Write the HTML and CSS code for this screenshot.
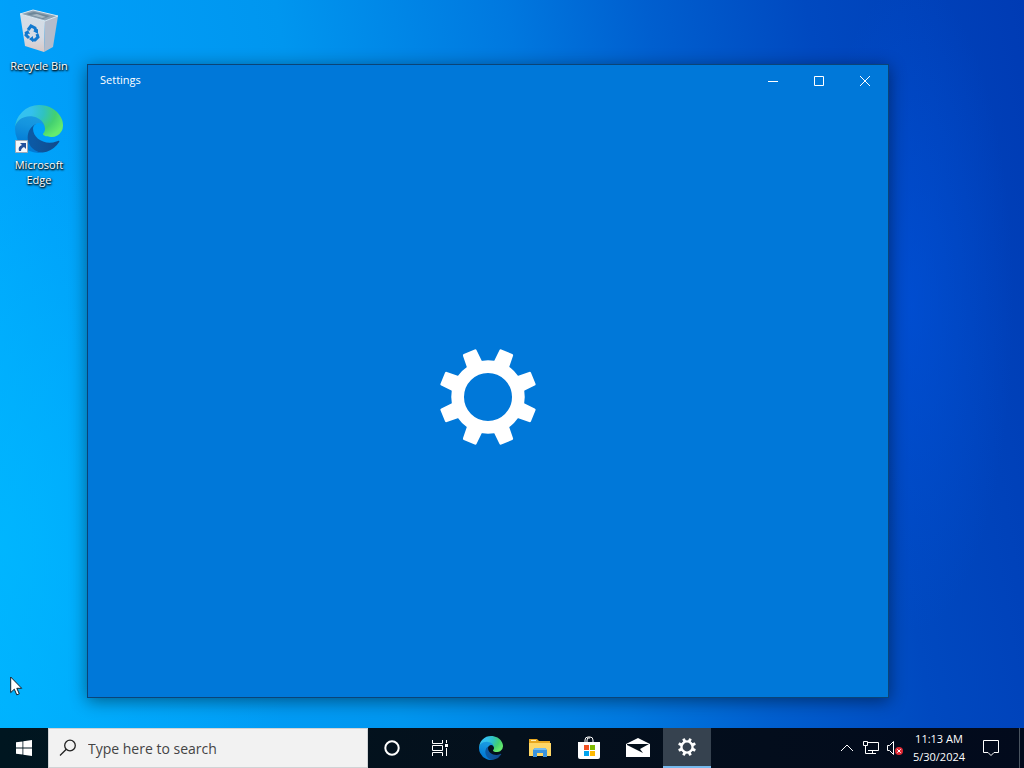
FILE: index.html
```
<!DOCTYPE html>
<html lang="en">

<head>
    <meta charset="UTF-8">
    <meta name="viewport" content="width=device-width, initial-scale=1.0">
    <title>Desktop</title>
    <link rel="stylesheet" href="styles.css">
</head>

<body>
    <!-- shared shapes -->
    <svg class="defs" aria-hidden="true">
        <defs>
            <linearGradient id="edge-navy" x1="0.2" y1="0.7" x2="1" y2="0.7">
                <stop offset="0" stop-color="#0c59a4" />
                <stop offset="1" stop-color="#114a8b" />
            </linearGradient>
            <linearGradient id="edge-blue" x1="0.6" y1="0" x2="0.4" y2="1">
                <stop offset="0" stop-color="#1b9de2" />
                <stop offset="0.3" stop-color="#1595df" />
                <stop offset="0.7" stop-color="#0680d7" />
                <stop offset="1" stop-color="#0078d4" />
            </linearGradient>
            <radialGradient id="edge-green" cx="0.1" cy="0.2" r="1">
                <stop offset="0" stop-color="#35c1f1" />
                <stop offset="0.25" stop-color="#34c1ed" />
                <stop offset="0.5" stop-color="#2fc2c0" />
                <stop offset="0.75" stop-color="#43d070" />
                <stop offset="1" stop-color="#66eb6e" />
            </radialGradient>
            <linearGradient id="bin-front" x1="0" y1="0" x2="0" y2="1">
                <stop offset="0" stop-color="#d3dde6" />
                <stop offset="0.6" stop-color="#d6dbe4" />
                <stop offset="1" stop-color="#d8c8c6" />
            </linearGradient>
        </defs>
        <symbol id="edge" viewBox="0 0 256 256">
            <path fill="url(#edge-navy)" d="M231 190.500c-3.400 1.800-6.900 3.300-10.500 4.700a101.900 101.900 0 0 1-35.900 6.400c-47.300 0-88.500-32.500-88.500-74.300a31.500 31.500 0 0 1 16.400-27.300c-42.800 1.800-53.800 46.400-53.800 72.500 0 73.900 68.100 81.400 82.800 81.400 7.900 0 19.800-2.300 27-4.600l1.300-.4a128.300 128.300 0 0 0 66.600-52.800 4.100 4.100 0 0 0-5.400-5.600z" />
            <path fill="url(#edge-blue)" d="M105.700 241.400a79.200 79.200 0 0 1-22.700-21.300 80.700 80.700 0 0 1 29.500-120c3.100-1.500 8.500-4.100 15.600-4a32.400 32.400 0 0 1 25.700 13 31.900 31.900 0 0 1 6.300 18.700c0-.2 24.500-79.600-80-79.600-43.900 0-80 41.700-80 78.200a130.200 130.200 0 0 0 12.100 56 128 128 0 0 0 156.400 67.100 75.500 75.500 0 0 1-62.800-8z" />
            <path fill="url(#edge-green)" d="M152.300 148.900c-.8 1-3.300 2.500-3.300 5.600 0 2.600 1.700 5.200 4.800 7.300 14.400 10 41.500 8.700 41.600 8.700a59.600 59.600 0 0 0 30.300-8.300 61.400 61.400 0 0 0 30.300-52.900c.3-22.400-8-37.300-11.300-43.900C223.500 23.900 177.700 0 128 0A128 128 0 0 0 0 126.200c.5-36.500 36.800-66 80-66 3.500 0 23.500.3 42 10.100 16.300 8.600 24.900 18.900 30.800 29.200 6.200 10.700 7.300 24.100 7.300 29.500s-2.700 13.300-7.800 19.900z" />
        </symbol>
        <symbol id="gear" viewBox="0 0 100 100">
            <circle cx="50" cy="50" r="31" fill="none" stroke="#fff" stroke-width="13" />
            <g fill="#fff">
                <path id="tooth" transform="rotate(22.5 50 50)" d="M44 0h12q1.500 0 1.500 1.500L58.500 17h-17L42.500 1.500Q42.500 0 44 0z" />
                <use href="#tooth" transform="rotate(45 50 50)" />
                <use href="#tooth" transform="rotate(90 50 50)" />
                <use href="#tooth" transform="rotate(135 50 50)" />
                <use href="#tooth" transform="rotate(180 50 50)" />
                <use href="#tooth" transform="rotate(225 50 50)" />
                <use href="#tooth" transform="rotate(270 50 50)" />
                <use href="#tooth" transform="rotate(315 50 50)" />
            </g>
        </symbol>
    </svg>

    <main class="desktop">
        <nav class="shortcuts">
            <a href="#" class="shortcut">
                <svg class="shortcut-icon" viewBox="0 0 48 48">
                    <path d="M5 8l13-4 25 6-13 5z" fill="#8fa3b3" />
                    <path d="M11 8l8-2 16 4-7 3z" fill="#6d8799" />
                    <path d="M16 9l6-1 9 3-4 1z" fill="#a9bac5" />
                    <path d="M5 8l25 7-1 31-19-6z" fill="url(#bin-front)" />
                    <path d="M30 15l13-5-5 31-9 5z" fill="#b4bccb" />
                    <path d="M5 8l13-4 25 6-13 5z" fill="none" stroke="#dce8f0" />
                    <g fill="none" stroke="#1279cf" stroke-width="3">
                        <path d="M13 24l3-4 4 2 1 3" />
                        <path d="M22 28l1 3-3 3h-3" />
                        <path d="M14 32l-3-3 1-3" />
                    </g>
                    <path d="M18 25l5-2v5zM18 30v6l-4-3zM9 27l4-3 2 4z" fill="#1279cf" />
                </svg>
                <span>Recycle Bin</span>
            </a>
            <a href="#" class="shortcut">
                <svg class="shortcut-icon" viewBox="0 0 48 48">
                    <use href="#edge" width="48" height="48" />
                    <path d="M.5 35.500h12v12H.5z" fill="#f5f7fa" stroke="#9daab8" />
                    <path d="M5 38h6v6l-2-2c-2 1-3 2-3 4H4c-1-3 0-5 3-6z" fill="#24519b" />
                </svg>
                <span>Microsoft Edge</span>
            </a>
        </nav>

        <section class="window">
            <header class="titlebar">
                <h1 class="title">Settings</h1>
                <button class="caption" aria-label="Minimize">
                    <svg viewBox="0 0 12 12"><path d="M1 6.500h10" /></svg>
                </button>
                <button class="caption" aria-label="Maximize">
                    <svg viewBox="0 0 12 12"><path d="M1.500 1.500h9v9h-9z" /></svg>
                </button>
                <button class="caption" aria-label="Close">
                    <svg viewBox="0 0 12 12"><path d="M1 1l10 10M11 1L1 11" /></svg>
                </button>
            </header>
            <div class="splash">
                <svg class="splash-icon"><use href="#gear" /></svg>
            </div>
        </section>

        <svg class="cursor" viewBox="0 0 13 20">
            <path d="M.7 1v15.600l3.600-3.400 2.500 5.700 2.500-1.100-2.500-5.500h4.900z" fill="#fff" stroke="#10202c" />
        </svg>
    </main>

    <footer class="taskbar">
        <button class="task" aria-label="Start">
            <svg width="16" height="16" viewBox="0 0 16 16" fill="#fff">
                <path d="M0 2.300L6.500 1.400v6.100H0zM7.300 1.300L16 0v7.500H7.300zM0 8.400h6.500v6.200L0 13.700zM7.300 8.400H16V16l-8.700-1.300z" />
            </svg>
        </button>
        <label class="search">
            <svg width="18" height="18" viewBox="0 0 18 18" fill="none" stroke="#222" stroke-width="1.300">
                <circle cx="11" cy="6.500" r="5.300" />
                <path d="M7.300 10.300L1 16.500" />
            </svg>
            <input type="text" class="search-input" placeholder="Type here to search" aria-label="Search">
        </label>
        <button class="task" aria-label="Cortana">
            <svg width="16" height="16" viewBox="0 0 16 16">
                <circle cx="8" cy="8" r="6.700" fill="none" stroke="#fff" stroke-width="2" />
            </svg>
        </button>
        <button class="task" aria-label="Task View">
            <svg width="18" height="16" viewBox="0 0 18 16" fill="none" stroke="#fff">
                <path d="M1.500 0v3.500h10V0M1.500 16v-3.500h10V16M1.500 5.500h10v5h-10zM15.500 0v3M15.500 8v8" />
                <path d="M14 4h3v3h-3z" fill="#fff" stroke="none" />
            </svg>
        </button>
        <div class="apps">
            <button class="task" aria-label="Microsoft Edge">
                <svg width="24" height="24"><use href="#edge" /></svg>
            </button>
            <button class="task" aria-label="File Explorer">
                <svg width="24" height="20" viewBox="0 0 24 20">
                    <path d="M1 1h8l2 2h11v15H1z" fill="#e8a820" />
                    <path d="M3 2h5v1H3z" fill="#fff0b8" />
                    <path d="M1 5h22v13H1z" fill="#ffd766" />
                    <path d="M5 19v-7l2-2h10l2 2v7h-4v-4H9v4z" fill="#3b94df" />
                    <path d="M7 10h10l2 2H5z" fill="#75bdf0" />
                </svg>
            </button>
            <button class="task" aria-label="Microsoft Store">
                <svg width="24" height="24" viewBox="0 0 24 24">
                    <path d="M8 7V4q0-3 3-3h2q3 0 3 3v3M10 7V4q0-3 3-2" fill="none" stroke="#fff" />
                    <path d="M1 6h22v15q0 2-2 2H3q-2 0-2-2z" fill="#fff" />
                    <path d="M7 9h5v5H7z" fill="#f25022" />
                    <path d="M13 9h5v5h-5z" fill="#7fba00" />
                    <path d="M7 15h5v5H7z" fill="#00a4ef" />
                    <path d="M13 15h5v5h-5z" fill="#ffb900" />
                </svg>
            </button>
            <button class="task" aria-label="Mail">
                <svg width="24" height="20" viewBox="0 0 24 20">
                    <path d="M0 6l12-6 12 6v13H0z" fill="#fff" />
                    <path d="M1 6h22l-9 5 3 4L1 7z" fill="#04101b" />
                </svg>
            </button>
            <button class="task active" aria-label="Settings">
                <svg width="18" height="18"><use href="#gear" /></svg>
            </button>
        </div>
        <div class="tray">
            <button class="tray-button" aria-label="Show hidden icons">
                <svg width="16" height="16" viewBox="0 0 16 16"><path d="M2 11l6-6 6 6" /></svg>
            </button>
            <button class="tray-button" aria-label="Network">
                <svg width="16" height="16" viewBox="0 0 16 16">
                    <path d="M5 2.500h10.500v8H5M.5 1.500h4v4h-4zM2.500 5.500v8H13M9.500 10.500v3" />
                </svg>
            </button>
            <button class="tray-button" aria-label="Volume">
                <svg width="16" height="16" viewBox="0 0 16 16">
                    <path d="M.5 5.500h2l4-4v13l-4-4h-2z" />
                    <circle cx="12" cy="11" r="4" fill="#e02a35" stroke="none" />
                    <path d="M10.300 9.300l3.400 3.400M13.700 9.300l-3.400 3.400" />
                </svg>
            </button>
            <button class="clock">
                <span>11:13 AM</span>
                <span>5/30/2024</span>
            </button>
            <button class="task" aria-label="Notifications">
                <svg width="18" height="18" viewBox="0 0 18 18" fill="none" stroke="#fff">
                    <path d="M1.500 1.500h15v12H12l-3 3-3-3H1.500z" />
                </svg>
            </button>
            <button class="peek" aria-label="Show desktop"></button>
        </div>
    </footer>
</body>

</html>
```
FILE: styles.css
```
*,
*::after,
*::before {
    margin: 0;
    padding: 0;
    box-sizing: border-box;
}

body {
    font-family: "Open Sans", "Noto Sans", sans-serif;
    font-size: 12px;
    line-height: 15px;
    color: #fff;
    height: 100vh;
    display: flex;
    flex-direction: column;
    overflow: hidden;
}

button {
    font: inherit;
    color: inherit;
    background: none;
    border: none;
}

svg {
    display: block;
    flex: none;
}

.defs {
    position: absolute;
    width: 0;
    height: 0;
}

/* desktop */
.desktop {
    flex: 1;
    min-height: 0;
    position: relative;
    background:
        radial-gradient(ellipse 10% 45% at 89% 42%, rgba(0, 82, 220, .6), transparent),
        radial-gradient(ellipse 30% 60% at 0 75%, rgba(0, 186, 255, .7), transparent),
        linear-gradient(80deg, #00aefe 0%, #00a0fa 12%, #0096ef 35%, #0078df 55%, #005fcf 67%, #0049c0 81%, #003bb4 100%);
}

.shortcuts {
    width: 78px;
    padding: 6px 2px;
    display: flex;
    flex-direction: column;
    gap: 32px;
}

.shortcut {
    display: flex;
    flex-direction: column;
    align-items: center;
    gap: 4px;
    color: #fff;
    font-size: 11px;
    text-align: center;
    text-decoration: none;
    text-shadow: 1px 1px 2px #000, 0 1px 2px #000;
}

.shortcut-icon {
    width: 48px;
    height: 48px;
}

/* settings window */
.window {
    position: absolute;
    top: 64px;
    right: 135px;
    bottom: 30px;
    left: 87px;
    display: flex;
    flex-direction: column;
    background-color: #0078d9;
    border: 1px solid #0a4478;
    box-shadow: 0 3px 16px rgba(0, 0, 0, .45);
}

.titlebar {
    height: 32px;
    padding-left: 12px;
    display: flex;
    align-items: center;
}

.title {
    flex: 1;
    font-size: 11px;
    line-height: 18px;
    padding-bottom: 2px;
    font-weight: 400;
}

.caption {
    width: 46px;
    height: 32px;
    display: flex;
    justify-content: center;
    align-items: center;
}

.caption svg {
    width: 12px;
    height: 12px;
    fill: none;
    stroke: #fff;
}

.splash {
    flex: 1;
    display: flex;
    justify-content: center;
    align-items: center;
}

.splash-icon {
    width: 98px;
    height: 98px;
}

.cursor {
    position: absolute;
    left: 10px;
    bottom: 32px;
    width: 13px;
    height: 20px;
}

/* taskbar */
.taskbar {
    height: 40px;
    display: flex;
    background: linear-gradient(90deg, #001620, #04101c 50%, #020a1c);
}

.task {
    width: 48px;
    height: 40px;
    display: flex;
    justify-content: center;
    align-items: center;
}

.search {
    flex: 0 1 320px;
    padding: 0 10px;
    display: flex;
    align-items: center;
    gap: 11px;
    background-color: #f2f2f2;
    border: 1px solid #d0d3d5;
}

.search-input {
    flex: 1;
    min-width: 0;
    font-family: inherit;
    font-size: 14px;
    background: none;
    border: none;
    outline: none;
}

.search-input::placeholder {
    color: #444;
    opacity: 1;
}

.apps {
    margin-left: 3px;
    display: flex;
    gap: 1px;
}

.active {
    background-color: #36424f;
    border-bottom: 2px solid #76b9ed;
}

.tray {
    margin-left: auto;
    display: flex;
    align-items: center;
}

.tray-button {
    width: 24px;
    height: 40px;
    display: flex;
    justify-content: center;
    align-items: center;
}

.tray-button svg {
    fill: none;
    stroke: #fff;
}

.clock {
    width: 56px;
    height: 40px;
    margin-left: 4px;
    font-size: 11px;
    line-height: 18px;
    display: flex;
    flex-direction: column;
    justify-content: center;
    align-items: center;
}

.peek {
    width: 5px;
    height: 40px;
    margin-left: 4px;
    border-left: 1px solid #4a5460;
}
```
